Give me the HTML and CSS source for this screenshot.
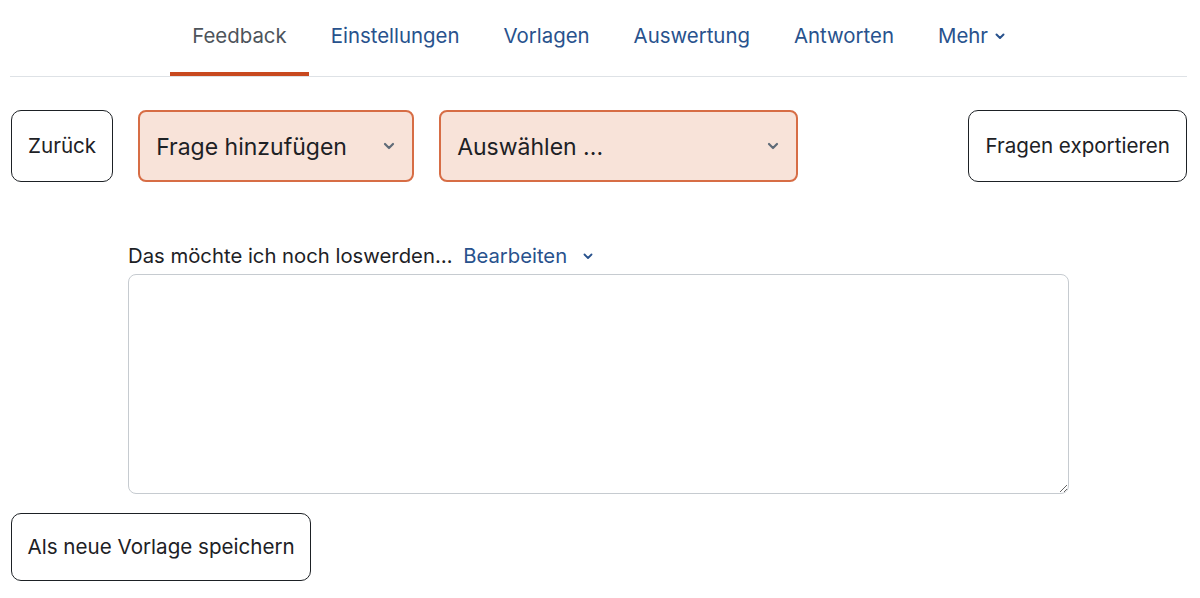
FILE: index.html
```html
<!DOCTYPE html>
<html lang="de">
<head>
<meta charset="utf-8">
<title>Feedback</title>
<link rel="stylesheet" href="styles.css">
</head>
<body>
<div class="page">
  <nav class="tabs">
    <a class="tab active" href="#">Feedback</a>
    <a class="tab" href="#">Einstellungen</a>
    <a class="tab" href="#">Vorlagen</a>
    <a class="tab" href="#">Auswertung</a>
    <a class="tab" href="#">Antworten</a>
    <a class="tab" href="#">Mehr <svg class="chev-nav" width="10" height="7" viewBox="0 0 10 7"><path d="M1.5 1.5 L5 5 L8.5 1.5" fill="none" stroke="currentColor" stroke-width="2" stroke-linecap="round" stroke-linejoin="round"/></svg></a>
  </nav>

  <div class="toolbar">
    <div class="left">
      <button class="btn">Zurück</button>
      <div class="select select-add"><span>Frage hinzufügen</span><svg class="chev" width="12" height="8" viewBox="0 0 12 8"><path d="M2 2 L6 6 L10 2" fill="none" stroke="currentColor" stroke-width="2.2" stroke-linecap="round" stroke-linejoin="round"/></svg></div>
      <div class="select select-pick"><span>Auswählen ...</span><svg class="chev" width="12" height="8" viewBox="0 0 12 8"><path d="M2 2 L6 6 L10 2" fill="none" stroke="currentColor" stroke-width="2.2" stroke-linecap="round" stroke-linejoin="round"/></svg></div>
    </div>
    <button class="btn">Fragen exportieren</button>
  </div>

  <div class="question">
    <div class="qlabel">Das möchte ich noch loswerden… <a class="edit" href="#">Bearbeiten <svg class="chev-edit" width="10" height="7" viewBox="0 0 10 7"><path d="M1.5 1.5 L5 5 L8.5 1.5" fill="none" stroke="currentColor" stroke-width="1.8" stroke-linecap="round" stroke-linejoin="round"/></svg></a></div>
    <textarea class="answer"></textarea>
  </div>

  <button class="btn btn-save">Als neue Vorlage speichern</button>
</div>
</body>
</html>
```

FILE: styles.css
```css
* { box-sizing: border-box; }
html, body { margin: 0; padding: 0; background: #fff; }
body {
  font-family: Inter, "Noto Sans", "Liberation Sans", sans-serif;
  color: #1d2125;
  font-size: 20px;
}
.page {
  padding: 0 13px 0 10px;
}
.tabs {
  display: flex;
  justify-content: center;
  border-bottom: 1px solid #dee2e6;
  height: 77px;
}
.tab {
  display: block;
  padding: 0 22px;
  line-height: 72px;
  height: 76px;
  border-bottom: 4px solid transparent;
  color: #28528d;
  text-decoration: none;
  font-size: 20.4px;
  white-space: nowrap;
}
.tab.active {
  color: #4d545b;
  border-bottom-color: #c8491f;
}
.chev-nav { vertical-align: middle; margin-left: 1px; position: relative; top: -1px; }

.toolbar {
  display: flex;
  justify-content: space-between;
  margin-top: 33px;
}
.left { display: flex; gap: 25px; }
.btn {
  font-family: inherit;
  font-size: 20.6px;
  color: #1d2125;
  background: #fff;
  border: 1px solid #1d2125;
  border-radius: 10px;
  height: 72px;
  padding: 0 16px 2px;
  margin-left: 1px;
  white-space: nowrap;
}
.select {
  display: flex;
  align-items: center;
  justify-content: space-between;
  height: 72px;
  padding: 2px 17px 0 16px;
  background: #f8e3d9;
  border: 2px solid #d76d45;
  border-radius: 8px;
  font-size: 23px;
}
.select-add { width: 276px; }
.select-pick { width: 359px; }
.chev { color: #5f6b78; margin-top: -2px; }

.question {
  margin: 59px 0 0 118px;
  width: 941px;
}
.qlabel {
  font-size: 20.3px;
  line-height: 30px;
  margin-bottom: 3px;
}
.edit {
  color: #28528d;
  text-decoration: none;
  margin-left: 5px;
}
.chev-edit { margin-left: 10px; vertical-align: middle; position: relative; top: -1px; }
.answer {
  display: block;
  width: 941px;
  height: 220px;
  border: 1px solid #c6cbd0;
  border-radius: 8px;
  resize: vertical;
  font-family: inherit;
}
.btn-save {
  margin-top: 19px;
  height: 68px;
  padding: 0 15.5px 2px;
}
```
